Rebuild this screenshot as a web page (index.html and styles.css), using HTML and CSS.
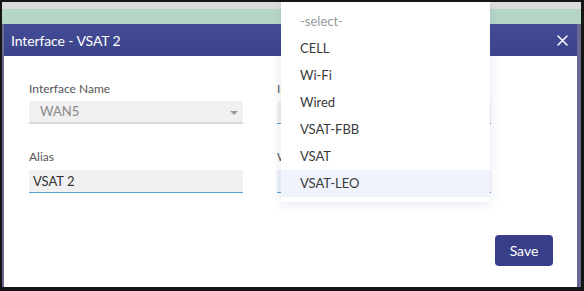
FILE: index.html
```html
<!DOCTYPE html>
<html>
<head>
<meta charset="utf-8">
<link rel="stylesheet" href="styles.css">
</head>
<body>
<div class="screen">
  <div class="bg-gray"></div>
  <div class="bg-green"></div>
  <div class="modal">
    <div class="modal-header">
      <span class="title">Interface - VSAT 2</span>
      <span class="close"><svg width="11" height="11" viewBox="0 0 11 11"><path d="M1 1L10 10M10 1L1 10" stroke="#fff" stroke-width="1.5" stroke-linecap="round"/></svg></span>
    </div>
    <div class="modal-body">
      <div class="form-grid">
        <div class="field">
          <label class="label">Interface Name</label>
          <div class="select">WAN5<span class="caret"></span></div>
        </div>
        <div class="field">
          <label class="label">Interface Type</label>
          <div class="input line"></div>
        </div>
        <div class="field">
          <label class="label">Alias</label>
          <div class="input line alias">VSAT 2</div>
        </div>
        <div class="field">
          <label class="label">WAN Type</label>
          <div class="input line tinted"></div>
        </div>
      </div>
      <div class="footer">
        <button class="save">Save</button>
      </div>
    </div>
  </div>
  <ul class="dropdown">
    <li class="placeholder">-select-</li>
    <li>CELL</li>
    <li>Wi-Fi</li>
    <li>Wired</li>
    <li>VSAT-FBB</li>
    <li>VSAT</li>
    <li class="active">VSAT-LEO</li>
  </ul>
</div>
</body>
</html>
```
FILE: styles.css
```css
html, body {
  margin: 0;
  padding: 0;
  background: #111;
}
.screen {
  position: relative;
  width: 584px;
  height: 291px;
  box-sizing: border-box;
  border-style: solid;
  border-color: #151515;
  border-width: 2px 3px 4px 2px;
  background: #686a92;
  display: flex;
  flex-direction: column;
  font-family: "Lato", "Open Sans", sans-serif;
  overflow: hidden;
}
.bg-gray {
  height: 7px;
  background: #dcdcdc;
}
.bg-green {
  height: 15px;
  background: #b6d6c5;
}
.modal {
  flex: 1;
  margin: 0 4px 0 2px;
  background: #fff;
  display: flex;
  flex-direction: column;
}
.modal-header {
  height: 32px;
  background: linear-gradient(180deg, #434c94 0%, #3b438b 100%);
  display: flex;
  align-items: center;
  justify-content: space-between;
  padding: 0 8px 0 7px;
}
.title {
  color: #fff;
  font-size: 14px;
  letter-spacing: -0.1px;
}
.close {
  display: flex;
  width: 11px;
  height: 11px;
  margin-right: 1px;
}
.modal-body {
  flex: 1;
  display: flex;
  flex-direction: column;
  padding: 25px 24px 21px 25px;
}
.form-grid {
  display: grid;
  grid-template-columns: 214px 214px;
  column-gap: 34px;
  row-gap: 25px;
}
.field {
  display: flex;
  flex-direction: column;
}
.label {
  font-size: 12px;
  line-height: 16px;
  color: #555;
  margin-bottom: 4px;
}
.select {
  position: relative;
  height: 21px;
  background: #f0f0f0;
  border-bottom: 2px solid #dadada;
  font-size: 13px;
  line-height: 21px;
  color: #8a8a8a;
  padding-left: 11px;
}
.caret {
  position: absolute;
  right: 5px;
  top: 10px;
  width: 0;
  height: 0;
  border-left: 4px solid transparent;
  border-right: 4px solid transparent;
  border-top: 4px solid #9a9a9a;
}
.input {
  height: 22px;
  background: #f1f1f1;
  font-size: 13px;
  line-height: 22px;
  color: #333;
  padding-left: 4px;
}
.input.line {
  border-bottom: 1px solid #4fa6cf;
}
.input.alias {
  margin-top: 1px;
}
.input.tinted {
  background: #eef2fb;
  margin-top: 1px;
}
.footer {
  margin-top: auto;
  display: flex;
  justify-content: flex-end;
}
.save {
  width: 58px;
  height: 31px;
  border: none;
  border-radius: 4px;
  background: #383f88;
  color: #fff;
  font-family: "Lato", "Open Sans", sans-serif;
  font-size: 14px;
  padding: 0;
}
.dropdown {
  position: absolute;
  left: 279px;
  top: 0;
  width: 209px;
  margin: 0;
  padding: 6px 0 5px;
  list-style: none;
  background: #fff;
  box-shadow: 0 2px 10px rgba(70, 80, 170, 0.14);
}
.dropdown li {
  height: 27px;
  line-height: 27px;
  padding-left: 19px;
  font-size: 13px;
  color: #3a3a3a;
}
.dropdown li.placeholder {
  color: #9a9a9a;
}
.dropdown li.active {
  background: #f0f3fc;
}
```
